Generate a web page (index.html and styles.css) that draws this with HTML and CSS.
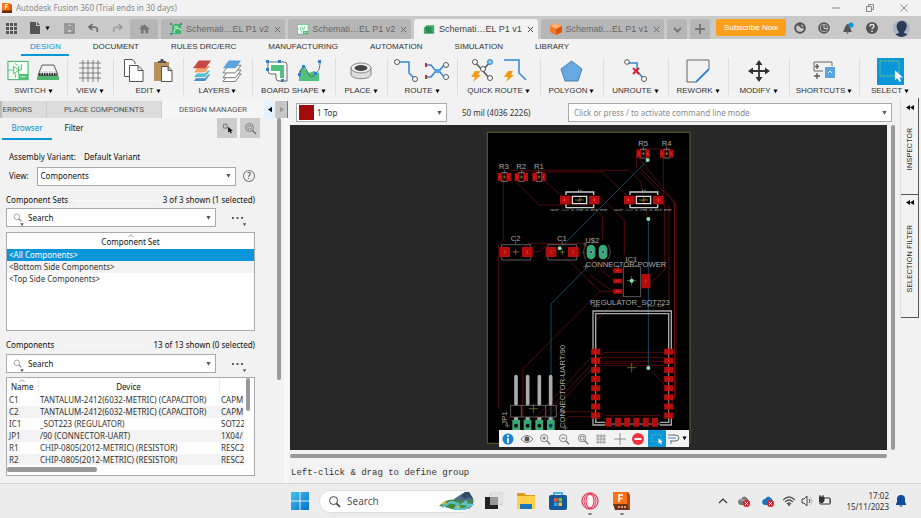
FILE: index.html
```html
<!DOCTYPE html>
<html lang="en">
<head>
<meta charset="utf-8">
<title>Autodesk Fusion 360</title>
<link rel="stylesheet" href="styles.css">
</head>
<body>
<svg class="defs" aria-hidden="true">
  <defs>
    <symbol id="down" viewBox="0 0 6 6"><path d="M.5.500h5L3 5z"/></symbol>
    <symbol id="close" viewBox="0 0 8 8"><path d="M1 1l6 6M7 1L1 7" fill="none" stroke="currentColor" stroke-width="1.100"/></symbol>
    <symbol id="mag" viewBox="0 0 14 14"><g fill="none" stroke="currentColor"><circle cx="6" cy="6" r="4.300"/><path d="M9 9l4 4" stroke-width="1.600"/></g></symbol>
    <symbol id="schem" viewBox="0 0 24 22"><rect x="1" y="1" width="21" height="19" fill="#f7fff9" stroke="#4dbd72" stroke-width="1.200"/><path d="M1 10h6v-4l5 4-5 4v-4M12 6v8M12 10h3V4M9 14v4M8 3l3 2" fill="none" stroke="#4dbd72"/><path d="M12 20v-6h10v6z" fill="#4dbd72"/><path d="M14 17h6" stroke="#d8f5e0"/></symbol>
    <symbol id="board" viewBox="0 0 14 12"><path d="M1 4l3-3h9v10H1z" fill="#3eaa66"/><path d="M4 4h3v3H4zM9 3v5M4 9h7" fill="none" stroke="#186b38"/></symbol>
    <symbol id="pick" viewBox="0 0 10 14"><path d="M1 0v11l3-2 2 4 2-1-2-4h4z" fill="currentColor"/></symbol>
    <symbol id="layers" viewBox="0 0 22 24"><path d="M1 23l6-8h13l-6 8z" class="l4"/><path d="M1 19l6-8h13l-6 8z" class="l3"/><path d="M1 14l6-8h13l-6 8z" class="l2"/><path d="M1 9l6-8h13l-6 8z" class="l1"/></symbol>
    <symbol id="r" viewBox="-22 -16 44 32" overflow="visible"><path d="M-10-13h20M-10 13h20" stroke="#aaa" stroke-width="2"/><path d="M-20-12h14v24h-14zM6-12h14v24H6z" fill="#b30d0d"/><path d="M-13-4v8M13-4v8" stroke="#f44" stroke-width="2"/><path d="M-5 0H5M0-5V5" stroke="#999a30" stroke-width="2"/></symbol>
  </defs>
</svg>

<header class="titlebar">
  <svg class="app-icon" viewBox="0 0 12 12"><path d="M0 1h10l2 1v10H0z" fill="#d95b08"/><path d="M0 0h9v9H0z" fill="#ff7817"/><path d="M0 9h12v3H0z" fill="#6b2b0d"/><path d="M4 7V2h3M4 4.500h2.500" fill="none" stroke="#fff" stroke-width="1.200"/></svg>
  <h1>Autodesk Fusion 360 (Trial ends in 30 days)</h1>
  <div class="window-buttons">
    <button aria-label="Minimize"><svg viewBox="0 0 8 8"><path d="M0 4h8"/></svg></button>
    <button aria-label="Restore"><svg viewBox="0 0 8 8"><path d="M.5 2.500h5v5h-5zM2.500 2V.500h5v5H6"/></svg></button>
    <button aria-label="Close"><svg viewBox="0 0 8 8"><path d="M.5.500l7 7M7.500.500l-7 7"/></svg></button>
  </div>
</header>

<nav class="tabbar" aria-label="Documents">
  <div class="quick">
    <button aria-label="Data panel"><svg viewBox="0 0 11 11" width="11" height="11"><path d="M0 0h3v3H0zM4 0h3v3H4zM8 0h3v3H8zM0 4h3v3H0zM4 4h3v3H4zM8 4h3v3H8zM0 8h3v3H0zM4 8h3v3H4zM8 8h3v3H8z" fill="#555"/></svg></button>
    <button class="file" aria-label="File"><svg viewBox="0 0 10 12" width="10" height="12"><path d="M0 0h6v4h4v8H0zM7 0l3 3H7z" fill="#555"/></svg><svg width="5" height="5"><use href="#down"/></svg></button>
    <button aria-label="Save"><svg viewBox="0 0 11 11" width="11" height="11"><path d="M1 1h9v9H1zM3 1v3h5V1M3 10V6h5v4" fill="none" stroke="#888" stroke-width="1.500"/></svg></button>
    <button aria-label="Undo"><svg viewBox="0 0 11 10" width="11" height="10"><path d="M1 4h5c3 0 4 2 3 5M4.500 1L1 4l3.500 3" fill="none" stroke="#666" stroke-width="1.600"/></svg></button>
    <button aria-label="Redo"><svg viewBox="0 0 11 10" width="11" height="10"><path d="M10 4H5C2 4 1 6 2 9M6.500 1L10 4 6.500 7" fill="none" stroke="#999" stroke-width="1.400"/></svg></button>
  </div>
  <button class="tab small home" aria-label="Home"><svg viewBox="0 0 12 10" width="11" height="10"><path d="M6 0l6 5h-2v5H7V6H5v4H2V5H0L2 3.500V1h1.500v1z" fill="#777"/></svg></button>
  <div class="tab"><svg width="12" height="12" viewBox="0 0 12 12"><path d="M2 2l2-1h7v10H2z" fill="#43b56c"/><path d="M4 10c0-5 4-6 7-3M4 4h4" stroke="#eaffef" fill="none"/><path d="M0 0h2v2H0zM10 0h2v2h-2zM0 10h2v2H0z" fill="#477fb5"/></svg><a href="#">Schemati…EL P1 v2</a><button aria-label="Close tab"><svg><use href="#close"/></svg></button></div>
  <div class="tab"><svg width="12" height="11"><use href="#schem"/></svg><a href="#">Schemati…EL P1 v2</a><button aria-label="Close tab"><svg><use href="#close"/></svg></button></div>
  <div class="tab active"><svg width="12" height="11"><use href="#board"/></svg><a href="#">Schemati…EL P1 v1</a><button aria-label="Close tab"><svg><use href="#close"/></svg></button></div>
  <div class="tab"><svg width="12" height="12" viewBox="0 0 12 12"><path d="M6 0l6 3v6l-6 3-6-3V3z" fill="#f27a24"/><path d="M6 0l6 3-6 3-6-3z" fill="#ffb071"/><path d="M6 6l6-3v6l-6 3z" fill="#d9560c"/></svg><a href="#">Schemati…EL P1 v1</a><button aria-label="Close tab"><svg><use href="#close"/></svg></button></div>
  <button class="tab small" aria-label="Tab list"><svg width="9" height="9" viewBox="0 0 9 9"><path d="M1 3l3.500 3.500L8 3" fill="none" stroke="#777" stroke-width="2"/></svg></button>
  <button class="tab small" aria-label="New tab"><svg width="10" height="10" viewBox="0 0 10 10"><path d="M5 0v10M0 5h10" stroke="#777" stroke-width="2"/></svg></button>
  <button class="subscribe">Subscribe Now</button>
  <div class="account">
    <button aria-label="Extensions"><svg viewBox="0 0 12 12"><circle cx="6" cy="6" r="4.800" fill="none" stroke="#555" stroke-width="2"/><path d="M6 1l1 4 4 1M3 2l3 2" stroke="#555" fill="none" stroke-width="1.600"/></svg></button>
    <button aria-label="Job status"><svg viewBox="0 0 12 12"><circle cx="6" cy="6" r="5.800" fill="#555"/><circle cx="6" cy="6" r="3.800" fill="none" stroke="#ccc" stroke-width=".8"/><path d="M6 3v3.500h3" stroke="#ddd" fill="none"/></svg></button>
    <button aria-label="Notifications"><svg viewBox="0 0 12 12"><path d="M1 10c2-2 1-7 5-8 3 1 2 6 4 8zM4 10.500h3L5.500 12z" fill="#555"/><circle cx="9" cy="3" r="2.600" fill="#0a96d8"/></svg></button>
    <button aria-label="Help"><svg viewBox="0 0 12 12"><circle cx="6" cy="6" r="6" fill="#555"/><path d="M4 4.500c0-3 4-2.500 4-.3C8 5.500 6 5.500 6 7.200M6 8.500V10" stroke="#eee" fill="none" stroke-width="1.400"/></svg></button>
    <button class="avatar" aria-label="Profile"><svg viewBox="0 0 17 17"><defs><clipPath id="av"><circle cx="8.500" cy="8.500" r="8.500"/></clipPath></defs><g clip-path="url(#av)"><path d="M0 0h17v17H0z" fill="#a9b4c4"/><path d="M1 17c1-4 5-3 5-5-4-4-3-11 3-11s6 7 2 11c0 2 4 1 5 5z" fill="#2c3c57"/></g></svg></button>
  </div>
</nav>

<nav class="menu" aria-label="Workspace">
  <a class="on" href="#">DESIGN</a><a href="#">DOCUMENT</a><a href="#">RULES DRC/ERC</a><a href="#">MANUFACTURING</a><a href="#">AUTOMATION</a><a href="#">SIMULATION</a><a href="#">LIBRARY</a>
</nav>

<div class="ribbon">
  <button><span class="pics"><svg width="23" height="22"><use href="#schem"/></svg><svg width="24" height="22" viewBox="0 0 24 22"><path d="M1 17l3-4h16l3 4v3H1z" fill="#4eb66e"/><path d="M2 15L6 5h12l4 10z" fill="#ddd" stroke="#666"/><path d="M7 6h10l2 5H5z" fill="#f3f3f3"/><path d="M3 14.500h18" stroke="#333" stroke-width="3" stroke-dasharray="1.500 1"/></svg></span><span>SWITCH<svg><use href="#down"/></svg></span></button>
  <button><span class="pics"><svg width="22" height="22" viewBox="0 0 22 22"><path d="M4 0v22M9 0v22M14 0v22M19 0v22M0 3h22M0 8h22M0 13h22M0 18h22" stroke="#666" stroke-width=".8"/></svg></span><span>VIEW<svg><use href="#down"/></svg></span></button>
  <button><span class="pics wide"><svg width="20" height="24" viewBox="0 0 20 24"><path d="M11 5V3L8 .500H.5v17H5" fill="#fff" stroke="#555"/><path d="M5.500 6.500H14l5 5v11H5.500zM14 6.500v5h5" fill="#fff" stroke="#555"/></svg><svg width="20" height="24" viewBox="0 0 20 24"><path d="M1 3h15v19H1z" fill="#b8935c"/><path d="M5 4V2h2l1-2h2l1 2h2v2z" fill="#555"/><path d="M8.500 7.500H15l4 4v11H8.500zM15 7.500v4h4" fill="#fff" stroke="#555"/></svg></span><span>EDIT<svg><use href="#down"/></svg></span></button>
  <button><span class="pics wide"><svg class="full" width="21" height="24"><use href="#layers"/></svg><svg class="plain" width="21" height="24"><use href="#layers"/></svg></span><span>LAYERS<svg><use href="#down"/></svg></span></button>
  <button><span class="pics wide"><svg width="23" height="23" viewBox="0 0 23 23"><path d="M2 2h16q3 0 3 3v16h-8q-3 0-3-3v-4H5q-3 0-3-3z" fill="#fff" stroke="#666"/><path d="M5 5h13v13h-4v-7H5z" fill="#50c27b"/><path d="M0 0h3v3H0zM12 0h3v3h-3zM0 8h3v3H0zM15 19h3v3h-3z" fill="#297fd1"/></svg><svg width="24" height="23" viewBox="0 0 24 23"><path d="M1 21V11l4-4 6 6 5-2 5 2v8z" fill="#50c27b"/><path d="M2 14q3-14 7-3t10 1q3-2 3-10" fill="none" stroke="#666"/><path d="M0 13h3v3H0zM4 5h3v3H4zM16 12h3v3h-3zM20 0h3v3h-3z" fill="#297fd1"/></svg></span><span>BOARD SHAPE<svg><use href="#down"/></svg></span></button>
  <button><span class="pics"><svg width="22" height="18" viewBox="0 0 22 18"><path d="M1 6v7c2 5 18 5 20 0V6z" fill="#ddd" stroke="#888"/><ellipse cx="11" cy="6" rx="10" ry="5" fill="#eee" stroke="#888"/><ellipse cx="11" cy="6" rx="6.500" ry="3" fill="#444"/></svg></span><span>PLACE<svg><use href="#down"/></svg></span></button>
  <button><span class="pics"><svg width="25" height="24" viewBox="0 0 25 24"><path d="M5 3h10v11l6 6" fill="none" stroke="#2f86d6" stroke-width="1.500"/><g fill="#fff" stroke="#555"><circle cx="3" cy="3" r="2.500"/><circle cx="21" cy="20" r="2.500"/></g></svg><svg width="25" height="20" viewBox="0 0 25 20"><path d="M1 4h5l4 5h5l4-5M1 16h5l4-5h5l4 5" fill="none" stroke="#2f86d6" stroke-width="1.500"/><path d="M1 2v4M1 14v4" stroke="#b33" stroke-width="2"/><g fill="#fff" stroke="#555"><circle cx="21" cy="4" r="2.500"/><circle cx="21" cy="16" r="2.500"/></g></svg></span><span>ROUTE<svg><use href="#down"/></svg></span></button>
  <button><span class="pics wide"><svg width="23" height="24" viewBox="0 0 23 24"><path d="M4 3l15 17M20 2l-8 9" stroke="#555" fill="none" stroke-width="1.500"/><g fill="#fff" stroke="#555"><circle cx="4" cy="3" r="2.500"/><circle cx="12" cy="10" r="2.500"/><circle cx="19" cy="19" r="2.500"/></g><circle cx="19" cy="3" r="2.500" fill="#8cc6f5" stroke="#2f86d6"/><path d="M4 12h5l-2 4h3L2 23l2-5H0z" fill="#f39b14"/></svg><svg width="24" height="24" viewBox="0 0 24 24"><path d="M1 1h15v13l7 7" fill="none" stroke="#2f86d6" stroke-width="1.500"/><path d="M5 12h5l-2 4h3L3 23l2-5H1z" fill="#f39b14"/></svg></span><span>QUICK ROUTE<svg><use href="#down"/></svg></span></button>
  <button><span class="pics"><svg width="23" height="22" viewBox="0 0 23 22"><path d="M11.500 1L22 9l-4 12H5L1 9z" fill="#65a9df" stroke="#4c83b5"/></svg></span><span>POLYGON<svg><use href="#down"/></svg></span></button>
  <button><span class="pics"><svg width="24" height="24" viewBox="0 0 24 24"><path d="M5 4h8v8l6 7" fill="none" stroke="#2f86d6" stroke-width="1.500"/><g fill="#fff" stroke="#555"><circle cx="3" cy="3" r="2.300"/><circle cx="20" cy="20" r="2.500"/></g><path d="M9 9l6 6M15 9l-6 6" stroke="#d8232d" stroke-width="2"/></svg></span><span>UNROUTE<svg><use href="#down"/></svg></span></button>
  <button><span class="pics"><svg width="25" height="24" viewBox="0 0 25 24"><path d="M10 23H1V1h22v9" fill="none" stroke="#666"/><path d="M10 23l13-13" stroke="#2f86d6" stroke-width="1.800"/></svg></span><span>REWORK<svg><use href="#down"/></svg></span></button>
  <button><span class="pics"><svg width="22" height="22" viewBox="0 0 22 22"><path d="M11 2v18M2 11h18" stroke="#333" stroke-width="1.800"/><path d="M11 0l3.500 5h-7zM11 22l3.500-5h-7zM0 11l5-3.500v7zM22 11l-5-3.500v7z" fill="#333"/></svg></span><span>MODIFY<svg><use href="#down"/></svg></span></button>
  <button><span class="pics"><svg width="22" height="20" viewBox="0 0 22 20"><path d="M10 10H1V1h18v4" fill="none" stroke="#666"/><path d="M4 3v5M2 5.500h4M4 12v6M1 15h6" stroke="#555" fill="none" stroke-width="1.300"/><path d="M12 6h10v11H12z" fill="#5aa5df"/><path d="M15 12l2-2 2 2" stroke="#fff" fill="none"/></svg></span><span>SHORTCUTS<svg><use href="#down"/></svg></span></button>
  <button><span class="pics"><svg class="select-pic" width="27" height="27" viewBox="0 0 27 27"><path d="M0 0h27v27H0z" fill="#0a96d8"/><path d="M3 3h19v15H3z" fill="none" stroke="#66c590" stroke-dasharray="3 1"/><use href="#pick" x="17" y="12" width="9" height="13" color="#fff"/></svg></span><span>SELECT<svg><use href="#down"/></svg></span></button>
</div>

<main>
  <aside class="manager">
    <div class="dock-tabs"><button class="errors">ERRORS</button><button class="place">PLACE COMPONENTS</button><button class="chosen">DESIGN MANAGER</button><button class="step" aria-label="Scroll left"><svg viewBox="0 0 5 7"><path d="M5 0v7L0 3.500z"/></svg></button><button class="step off" aria-label="Scroll right"><svg viewBox="0 0 5 7"><path d="M0 0v7l5-3.500z"/></svg></button></div>
    <div class="manager-body">
      <div class="content">
        <div class="views"><a class="on" href="#">Browser</a><a href="#">Filter</a>
          <button aria-label="Select in canvas"><svg viewBox="0 0 14 14"><path d="M2.500 2.500h4v4h-4zM6 6l3 2" fill="none" stroke="#777"/><use href="#pick" x="7" y="5" width="6" height="8" color="#111"/></svg></button><button aria-label="Zoom to selection"><svg viewBox="0 0 14 14" color="#777"><use href="#mag"/><circle cx="6" cy="6" r="2" fill="none" stroke="#777"/></svg></button></div>
        <div class="variant"><span>Assembly Variant:</span><span>Default Variant</span></div>
        <div class="view-row"><label for="view">View:</label><span class="drop"><select id="view"><option>Components</option></select><svg><use href="#down"/></svg></span><button class="help" aria-label="Help">?</button></div>
        <div class="heading"><h2>Component Sets</h2><span>3 of 3 shown (1 selected)</span></div>
        <div class="search-row"><span class="drop"><svg class="mag"><use href="#mag"/></svg><svg class="mag-arrow"><use href="#down"/></svg><input type="text" value="Search" aria-label="Search component sets"><svg><use href="#down"/></svg></span><button class="more" aria-label="More"><svg class="dots" viewBox="0 0 12 2"><path d="M0 0h2v2H0zM5 0h2v2H5zM10 0h2v2h-2z"/></svg><svg class="tick"><use href="#down"/></svg></button></div>
        <div class="box sets"><table><thead><tr><th><svg class="sort" viewBox="0 0 6 3"><path d="M.5 3L3 .500 5.500 3"/></svg>Component Set</th></tr></thead><tbody><tr class="picked"><td>&lt;All Components&gt;</td></tr><tr><td>&lt;Bottom Side Components&gt;</td></tr><tr><td>&lt;Top Side Components&gt;</td></tr></tbody></table></div>
        <div class="heading second"><h2>Components</h2><span>13 of 13 shown (0 selected)</span></div>
        <div class="search-row"><span class="drop"><svg class="mag"><use href="#mag"/></svg><svg class="mag-arrow"><use href="#down"/></svg><input type="text" value="Search" aria-label="Search components"><svg><use href="#down"/></svg></span><button class="more" aria-label="More"><svg class="dots" viewBox="0 0 12 2"><path d="M0 0h2v2H0zM5 0h2v2H5zM10 0h2v2h-2z"/></svg><svg class="tick"><use href="#down"/></svg></button></div>
        <div class="box parts">
          <div class="clip"><table><thead><tr><th class="c1"><svg class="sort" viewBox="0 0 6 3"><path d="M.5 3L3 .500 5.500 3"/></svg>Name</th><th class="c2">Device</th><th></th></tr></thead><tbody>
            <tr><td>C1</td><td>TANTALUM-2412(6032-METRIC) (CAPACITOR)</td><td>CAPM</td></tr>
            <tr><td>C2</td><td>TANTALUM-2412(6032-METRIC) (CAPACITOR)</td><td>CAPM</td></tr>
            <tr><td>IC1</td><td>_SOT223 (REGULATOR)</td><td>SOT22</td></tr>
            <tr><td>JP1</td><td>/90 (CONNECTOR-UART)</td><td>1X04/</td></tr>
            <tr><td>R1</td><td>CHIP-0805(2012-METRIC) (RESISTOR)</td><td>RESC2</td></tr>
            <tr><td>R2</td><td>CHIP-0805(2012-METRIC) (RESISTOR)</td><td>RESC2</td></tr></tbody></table></div>
          <div class="vbar"></div><div class="hbar"></div>
        </div>
      </div>
      <div class="panel-bar"></div>
    </div>
  </aside>

  <section class="editor">
    <div class="command">
      <span class="drop layer"><i class="swatch"></i><select aria-label="Layer"><option>1 Top</option></select><svg><use href="#down"/></svg></span>
      <span class="coords">50 mil (4036 2226)</span>
      <span class="drop line"><input type="text" placeholder="Click or press / to activate command line mode" aria-label="Command line"><svg><use href="#down"/></svg></span>
    </div>
    <div class="stage">
      <div class="canvas"><div class="board">
        <svg class="pcb" viewBox="0 0 651 975" role="img" aria-label="Board layout">
          <path d="M22 22H630V955H22z" fill="#000" stroke="#62602b" stroke-width="3"/>
          <g fill="none" stroke="#7a1010" stroke-width="2">
            <path d="M70 165V345L56 362V850L90 884M124 141H367L455 225M106 168L178 240H335L367 275V345M186 160L258 225M90 136H447L482 170L503 282M357 213L433 285V390M470 130V72H575M476 98L584 232V820L567 842M480 130L588 236V812M550 86V213L482 142M497 225H553V436L511 475M90 380H120L145 355H310L330 378M158 380H178L205 355M250 390L340 480M296 382H315L362 432L400 468M370 395L400 437M330 450L372 482L400 499M325 465L360 499H400M360 499L128 733V875M145 902L333 697H555M170 895L330 722M334 735L372 682H555M345 722H565M370 709H565M178 900L345 722M212 890L243 860H345L380 872H540M235 915L265 875H345M345 590L430 510M347 675V565M507 730L565 790M552 682H585M340 735L350 715H480"/>
            <path d="M567 240V560M584 232V820" stroke="#7b1010"/>
          </g>
          <path d="M503 105L250 360M505 282V730M213 905V537L330 418" stroke="#1d6f90" stroke-width="2" fill="none"/>
          <g><use href="#r" x="51" y="140" width="44" height="32"/><use href="#r" x="102" y="140" width="44" height="32"/><use href="#r" x="155" y="140" width="44" height="32"/><use href="#r" x="468" y="70" width="44" height="32"/><use href="#r" x="538" y="70" width="44" height="32"/></g>
          <g id="switch"><path d="M258 210V201H341V210M258 238V248H341V238" fill="none" stroke="#ccc" stroke-width="4"/><path d="M277 214H320V236H277z" fill="none" stroke="#ddd" stroke-width="4"/><path d="M240 212h32v26h-32zM327 212h32v26h-32z" fill="#b30d0d"/><path d="M285 225H312M290 229L307 220M299 217V233" stroke="#898b39" stroke-width="2"/><path d="M253 220v10M248 225h10M343 220v10M338 225h10" stroke="#f44" stroke-width="2"/><path d="M294 192l5 8 5-8v8h-10z" fill="#aaa"/></g>
          <use href="#switch" x="192"/>
          <g fill="none" stroke="#888" stroke-width="2"><path d="M65 359H152V405H65zM204 359H290V405H204zM430 425H482V515H430z"/><path d="M73 135v12M125 135v12M176 135v12M490 65v12M560 65v12M107 348v10M247 348v10"/></g>
          <path d="M58 366h32v30H58zM126 366h32v30h-32zM197 366h32v30h-32zM264 366h32v30h-32zM400 430h27v14h-27zM400 461h27v14h-27zM400 492h27v14h-27zM484 447h27v43h-27z" fill="#b30d0d"/>
          <path d="M74 376v10M142 376v10M213 376v10M280 376v10M408 437h10M408 468h10M408 499h10M497 463v10" stroke="#f44" stroke-width="2"/>
          <path d="M99 381h16M107 373v16M239 381h16M247 373v16M441 728h28M455 714v28M146 851h28M160 837v28M441 467h28M455 453v28" stroke="#8a8c36" stroke-width="2"/>
          <g fill="#35aa72"><rect x="320" y="359" width="26" height="44" rx="13"/><rect x="356" y="359" width="26" height="44" rx="13"/></g>
          <path d="M318 359q-14 22 0 44M384 359q14 22 0 44" fill="none" stroke="#777" stroke-width="2"/>
          <g fill="#24504c" stroke="#9ad" stroke-width="2"><circle cx="333" cy="381" r="5"/><circle cx="369" cy="381" r="5"/></g>
          <path d="M339 676V558H574V676M347 676V566H566V676M339 880V900H375M347 880V892H375M574 880V900H540M566 880V892H540" fill="none" stroke="#aaa" stroke-width="4"/>
          <path d="M347 670V888M566 670V888M375 897H540" stroke="#999" stroke-width="3"/>
          <path d="M347 671V890M566 671V890" stroke="#b30d0d" stroke-width="27" stroke-dasharray="18 9.400"/>
          <path d="M377 892H535" stroke="#b30d0d" stroke-width="27" stroke-dasharray="18 9.800"/>
          <path d="M345 676v8M345 703v8M345 731v8M345 758v8M345 786v8M345 813v8M345 840v8M345 868v8M566 676v8M566 703v8M566 731v8M566 758v8M566 786v8M566 813v8M566 840v8M566 868v8" stroke="#f13a3a" stroke-width="2"/>
          <path d="M92 841H229V876H92zM124 841V876M197 841V876" fill="none" stroke="#888" stroke-width="2"/>
          <path d="M108 755V836M143 755V836M178 755V836M212 755V836" stroke="#aaa" stroke-width="11" stroke-linecap="round"/>
          <path d="M108 877v12M143 877v12M178 877v12M212 877v12" stroke="#aaa" stroke-width="12"/>
          <path d="M97 884h23v34H97zM131 884h23v34h-23zM166 884h23v34h-23zM201 884h23v34h-23z" fill="#35aa72"/>
          <g fill="#111"><circle cx="108" cy="902" r="6"/><circle cx="143" cy="902" r="6"/><circle cx="178" cy="902" r="6"/><circle cx="212" cy="902" r="6" fill="#163d66"/></g>
          <g fill="#8fe0b5"><circle cx="503" cy="105" r="6"/><circle cx="505" cy="282" r="6"/><circle cx="239" cy="370" r="6"/><circle cx="455" cy="467" r="6"/><circle cx="505" cy="729" r="6"/></g>
          <path d="M310 425h14M317 418v14M75 902h14M82 895v14M249 909h14M256 902v14M310 357h10M315 352v10M410 425h10M415 420v10" stroke="#888" stroke-width="2"/>
          <g class="names"><text x="57" y="133">R3</text><text x="109" y="133">R2</text><text x="162" y="133">R1</text><text x="475" y="63">R5</text><text x="545" y="63">R4</text><text x="92" y="348">C2</text><text x="231" y="348">C1</text><text x="316" y="354">U$2</text><text x="436" y="411">IC1</text><text x="317" y="425">CONNECTOR-POWER</text><text x="330" y="540">REGULATOR_SOT223</text><text transform="translate(255 909) rotate(-90)">CONNECTOR-UART/90</text><text transform="translate(80 899) rotate(-90)">JP1</text></g>
          <g class="tiny"><text x="209" y="258">SWIP-7+2*6-SMD-6.0X3.5MM</text><text x="401" y="258">SWIP-7+2*6-SMD-6.0X3.5MM</text><text x="338" y="546">U$1</text><text x="502" y="546">ESP-12F</text></g>
        </svg>
        <div class="view-tools">
          <button aria-label="Info"><svg viewBox="0 0 12 12"><circle cx="6" cy="6" r="5.500" fill="#1882d8"/><path d="M6 2v2M6 5v5" stroke="#fff" stroke-width="1.700"/></svg></button>
          <button aria-label="Visibility"><svg viewBox="0 0 12 12"><path d="M0 6q6-7 12 0-6 7-12 0z" fill="#fff" stroke="#777"/><circle cx="6" cy="6" r="2.500" fill="#555"/></svg></button>
          <button aria-label="Zoom in"><svg viewBox="0 0 14 14" color="#777"><use href="#mag"/><path d="M6 4v4M4 6h4" stroke="#555"/></svg></button>
          <button aria-label="Zoom out"><svg viewBox="0 0 14 14" color="#777"><use href="#mag"/><path d="M4 6h4" stroke="#555"/></svg></button>
          <button aria-label="Zoom to fit"><svg viewBox="0 0 14 14" color="#777"><use href="#mag"/><path d="M4 4h4v4H4z" stroke="#888" fill="none"/></svg></button>
          <button aria-label="Grid"><svg viewBox="0 0 12 12"><path d="M3 1v10M6 1v10M9 1v10M1 3h10M1 6h10M1 9h10" stroke="#888" stroke-width=".8"/></svg></button>
          <button aria-label="Origin"><svg viewBox="0 0 12 12"><path d="M6 0v12M0 6h12" stroke="#777" stroke-width=".8"/></svg></button>
          <button aria-label="Stop"><svg viewBox="0 0 12 12"><circle cx="6" cy="6" r="6" fill="#ef3340"/><path d="M2.500 6h7" stroke="#fff" stroke-width="2"/></svg></button>
          <button class="on" aria-label="Group select"><svg viewBox="0 0 14 14"><path d="M1 2h11v8H1z" fill="none" stroke="#56be95" stroke-dasharray="2 1"/><use href="#pick" x="8" y="6" width="6" height="8" color="#fff"/></svg></button>
          <button class="last" aria-label="Selection options"><svg viewBox="0 0 12 12"><path d="M0 2h7q4 0 4 3t-4 3H2" fill="none" stroke="#666"/><path d="M0 5h8M3 8v3" stroke="#2f86d6"/></svg><svg class="arrow"><use href="#down"/></svg></button>
        </div>
      </div></div>
      <div class="stage-v"></div>
      <div class="stage-h"></div>
    </div>
    <p class="status">Left-click &amp; drag to define group</p>
  </section>

  <aside class="side">
    <button class="inspector"><svg viewBox="0 0 8 5"><path d="M4 0v5L0 2.500zM8 0v5L4 2.500z"/></svg><span>INSPECTOR</span></button>
    <button class="selection"><svg viewBox="0 0 8 5"><path d="M4 0v5L0 2.500zM8 0v5L4 2.500z"/></svg><span>SELECTION FILTER</span></button>
  </aside>
</main>

<footer class="taskbar">
  <div class="apps">
    <button aria-label="Start"><svg width="18" height="18" viewBox="0 0 18 18"><defs><linearGradient id="win" x2="1" y2="1"><stop stop-color="#43c4f3"/><stop offset="1" stop-color="#0670c9"/></linearGradient></defs><path d="M0 0h8.500v8.500H0zM9.500 0H18v8.500H9.500zM0 9.500h8.500V18H0zM9.500 9.500H18V18H9.500z" fill="url(#win)"/></svg></button>
    <label class="find"><svg width="13" height="13"><use href="#mag"/></svg><input type="text" value="Search" aria-label="Search Windows"><svg class="scene" width="35" height="18" viewBox="0 0 35 18"><path d="M15 7l6-4 5-3h4l4 6q2 7-4 11H14z" fill="#526f83"/><path d="M22 4l4-4h4l4 7-5-2-3 2z" fill="#314c69"/><path d="M0 14q8-8 17-6 8 3 17-1-1 8-6 10H12q-4-2-12-3z" fill="#468a3b"/><path d="M3 15l9-5 7 2-3 5h10l6-4-8-1 4-3" fill="none" stroke="#5bc3cf" stroke-width="2.500"/><path d="M3 12l4-2M18 16l3-2" stroke="#d2c340" stroke-width="2"/></svg></label>
    <button aria-label="Task view"><svg width="18" height="18" viewBox="0 0 18 18"><path d="M5 1h13v12H5z" fill="#e4e4e4" stroke="#d5d5d5"/><path d="M0 5h5v8h8v4H0z" fill="#222"/><path d="M5 5h8v8H5z" fill="#999"/></svg></button>
    <button aria-label="File Explorer"><svg width="18" height="18" viewBox="0 0 18 18"><path d="M0 1h7l2 2h9v6H0z" fill="#d99a1b"/><path d="M0 4h18v13H0z" fill="#ffcf4b"/><path d="M3 17v-5h12v5z" fill="#1877bd"/></svg></button>
    <button aria-label="Microsoft Store"><svg width="18" height="18" viewBox="0 0 18 18"><path d="M5 4V1h8v3" fill="none" stroke="#43b1ed" stroke-width="2"/><rect y="3" width="18" height="15" rx="2" fill="#17569a"/><path d="M5 6h3.500v3.500H5z" fill="#ed5936"/><path d="M9.500 6H13v3.500H9.500z" fill="#86bd34"/><path d="M5 10.500h3.500V14H5z" fill="#2fa5e8"/><path d="M9.500 10.500H13V14H9.500z" fill="#f5bd2d"/></svg></button>
    <button class="running" aria-label="Opera GX"><svg width="18" height="18" viewBox="0 0 18 18"><g fill="#fff5f7" stroke="#e2405f" stroke-width="1.300"><circle cx="9" cy="9" r="8"/><ellipse cx="9" cy="9" rx="4" ry="7"/></g><path d="M5 3q-4 6 0 12M13 3q4 6 0 12" fill="none" stroke="#e2405f"/></svg></button>
    <button class="running" aria-label="Fusion 360"><svg width="17" height="18" viewBox="0 0 17 18"><path d="M2 0h13l2 3v15H2z" fill="#b94809"/><path d="M0 0h14v12H0z" fill="#fb7117"/><path d="M0 12h14l2 6H2z" fill="#713011"/><path d="M6 10V3h4M6 6.500h3.500" fill="none" stroke="#fff" stroke-width="1.600"/><path d="M5 15h8" stroke="#e5c3ad" stroke-width="1.500" stroke-dasharray="2 1"/></svg></button>
  </div>
  <div class="tray">
    <button aria-label="Hidden icons"><svg viewBox="0 0 12 12"><path d="M2 8l4-4 4 4" fill="none" stroke="#333" stroke-width="1.200"/></svg></button>
    <button class="cloud" aria-label="Cloud, sync error"><svg viewBox="0 0 12 12"><path d="M0 8q0-4 3-4 3-5 7 0l2 4-2 2H2z" fill="#777"/><path d="M2 5q6-1 8 4" stroke="#ccc" fill="none"/><circle cx="8.500" cy="8.500" r="3.500" fill="#d92432"/><path d="M7 7l3 3M10 7l-3 3" stroke="#fff"/></svg></button>
    <button class="cloud" aria-label="OneDrive, sync error"><svg viewBox="0 0 12 12"><path d="M0 8q0-4 3-4 3-5 7 0l2 4-2 2H2z" fill="#1b75bd"/><circle cx="8.500" cy="8.500" r="3.500" fill="#d92432"/><path d="M7 7l3 3M10 7l-3 3" stroke="#fff"/></svg></button>
    <button aria-label="Wi-Fi"><svg viewBox="0 0 12 12"><path d="M0 5q6-6 12 0M2 7q4-4 8 0M4 9q2-2 4 0" fill="none" stroke="#555" stroke-width="1.200"/><circle cx="6" cy="10" r="1" fill="#333"/></svg></button>
    <button aria-label="Volume"><svg viewBox="0 0 12 12"><path d="M1 4h2l3-3v10L3 8H1z" fill="none" stroke="#444"/><path d="M8 4q2 2 0 4" fill="none" stroke="#444"/><path d="M9 2q4 4 0 8" fill="none" stroke="#bbb"/></svg></button>
    <button aria-label="Battery"><svg viewBox="0 0 12 12"><path d="M5 3h6v6H1V7M11 5h1v2h-1" fill="none" stroke="#333"/><path d="M0 2h5v4L3 8 0 6zM1 0v2M4 0v2" fill="#333" stroke="#333"/></svg></button>
    <div class="clock"><span>17:02</span><span>15/11/2023</span></div>
    <button aria-label="Notifications"><svg viewBox="0 0 12 12"><path d="M1 9l1-2V4q0-4 4-4t4 4v3l1 2v1H1zM4 10.500h4L6 12z" fill="#124a9c"/></svg></button>
  </div>
</footer>
</body>
</html>
```
FILE: styles.css
```css
* { box-sizing: border-box; }
body {
  margin: 0;
  min-height: 100vh;
  display: flex;
  flex-direction: column;
  background: #f2f2f2;
  color: #333;
  font: 8px/12px "Noto Sans", sans-serif;
}
button, input, select { font: inherit; color: inherit; }
button { border: 0; padding: 0; background: none; }
a { color: inherit; text-decoration: none; }
h1, h2, p { margin: 0; font-size: inherit; font-weight: 400; }
svg { display: block; flex: none; }
.defs { position: absolute; width: 0; height: 0; }

.titlebar { display: flex; align-items: center; gap: 4px; height: 16px; padding: 0 13px 0 2px; color: #888; }
.app-icon { width: 10px; height: 12px; }
.window-buttons { display: flex; gap: 26px; margin-left: auto; }
.window-buttons svg { width: 8px; height: 8px; fill: none; stroke: #888; }

.tabbar { display: flex; gap: 3px; height: 23px; padding: 3px 11px 0 6px; background: #c9c9c9; font: 9px/12px "Liberation Sans", sans-serif; }
.quick { display: flex; align-items: center; gap: 13px; width: 121px; padding-bottom: 2px; }
.quick .file { display: flex; align-items: center; gap: 5px; margin-right: 1px; }
.tab { display: flex; flex: 1; align-items: center; gap: 4px; min-width: 0; padding: 0 4px 0 9px; border-radius: 3px 3px 0 0; background: #b6b6b6; color: #666; }
.tab a { flex: 1; white-space: nowrap; }
.tab button svg { width: 7px; height: 7px; }
.tab.active { background: #f2f2f2; color: #444; }
.tab.small { flex: 0 0 20px; justify-content: center; padding: 0; }
.tab.home { flex-basis: 28px; }
.subscribe { width: 70px; height: 17px; margin-left: 3px; border-radius: 2px; background: #fba01d; color: #fff; font-size: 8px; }
.account { display: flex; align-items: center; gap: 12px; margin-left: 5px; padding-bottom: 2px; }
.account svg { width: 12px; height: 12px; }
.account .avatar { margin-left: 3px; }
.account .avatar svg { width: 17px; height: 17px; }

.menu { display: flex; gap: 32px; height: 17px; padding-left: 30px; font: 8px/16px "Liberation Sans", sans-serif; }
.menu .on { margin: 0 -8px 0 -9px; padding: 0 8px 0 9px; border-bottom: 2px solid #0a96d8; color: #0a8fcf; }

.ribbon { display: grid; grid-template-columns: 67fr 46fr 70fr 69fr 83fr 52fr 70fr 83fr 63fr 65fr 60fr 61fr 70fr 62fr; height: 42px; font: 8px/10px "Liberation Sans", sans-serif; }
.ribbon button { position: relative; display: flex; flex-direction: column; align-items: center; white-space: nowrap; }
.ribbon button + button::before { content: ""; position: absolute; left: 0; top: 2px; width: 1px; height: 37px; background: #ddd; }
.pics { display: flex; align-items: center; justify-content: center; gap: 6px; height: 30px; }
.pics.wide { gap: 9px; }
.ribbon button > span:last-child { display: flex; align-items: center; gap: 2px; }
.ribbon button > span:last-child svg { width: 5px; height: 5px; }
.full { --a: #c74747; --b: #f4a068; --c: #5dbfd0; --d: #4a8fcc; --edge: #fff; }
.plain { --a: #5aa4de; --b: #fff; --c: #fff; --d: #fff; --edge: #777; }
.l1 { fill: var(--a); }
.l2 { fill: var(--b); }
.l3 { fill: var(--c); }
.l4 { fill: var(--d); }
.l2, .l3, .l4 { stroke: var(--edge); stroke-width: 1px; }

main { display: flex; flex: 1; min-height: 385px; }
.manager { display: flex; flex-direction: column; width: 289px; padding-top: 3px; }
.dock-tabs { display: flex; height: 17px; font: 8px/17px Roboto, sans-serif; }
.dock-tabs button { background: #dcdcdc; color: #555; border-right: 1px solid #ccc; }
.dock-tabs .errors { width: 47px; padding-right: 14px; text-align: right; border-left: 2px solid #bbb; }
.dock-tabs .place { width: 115px; }
.dock-tabs .chosen { width: 102px; background: #f5f5f5; border: 0; }
.dock-tabs .step { display: flex; align-items: center; justify-content: center; width: 12px; background: #e3f2fc; }
.dock-tabs .off { background: #c6c6c6; border-right-color: #777; fill: #999; }
.step svg { width: 4px; height: 7px; }
.manager-body { display: flex; flex: 1; border-right: 5px solid #f8f8f8; }
.content { flex: 1; min-width: 0; padding-left: 6px; color: #111; }
.panel-bar { width: 4px; height: 262px; margin: 0 3px 0 22px; border-radius: 2px; background: #999; }
.views { display: flex; height: 22px; gap: 3px; }
.views a { width: 38px; margin-right: 8px; text-align: center; line-height: 20px; }
.views .on { width: 50px; margin-left: -4px; margin-right: 0; border-bottom: 2px solid #0a96d8; color: #0a8fcf; }
.views button { display: flex; align-items: center; justify-content: center; width: 20px; height: 20px; background: #ccc; }
.views a + button { margin-left: auto; }
.views button:last-child { margin-right: -5px; }
.views button svg { width: 13px; height: 13px; }
.variant { display: flex; gap: 8px; padding: 11px 3px 4px; }
.view-row { display: flex; align-items: center; height: 18px; padding-left: 3px; }
.view-row label { width: 28px; }
.drop { position: relative; display: flex; align-items: center; height: 19px; border: 1px solid #aaa; background: #fff; }
.drop select, .drop input { flex: 1; min-width: 0; width: 100%; padding: 0 3px; border: 0; background: none; appearance: none; outline: 0; }
.drop > svg { position: absolute; right: 4px; width: 5px; height: 6px; fill: #555; pointer-events: none; }
.view-row .drop { width: 203px; }
.help { width: 12px; height: 12px; margin-left: 7px; border: 1px solid #777; border-radius: 50%; line-height: 10px; }
.heading { display: flex; justify-content: space-between; align-items: center; gap: 6px; margin: 9px 0 2px; }
.heading::before { content: ""; order: 1; flex: 1; height: 1px; background: #fafafa; }
.heading span { order: 2; }
.heading.second { margin: 8px 0 3px; }
.search-row { display: flex; }
.search-row .drop { width: 210px; }
.search-row .drop input { padding-left: 21px; }
.search-row .drop .mag { left: 6px; width: 9px; height: 9px; fill: none; color: #777; }
.search-row .drop .mag-arrow { left: 13px; top: 14px; width: 4px; height: 4px; }
.more { position: relative; margin-left: 16px; fill: #555; }
.dots { width: 11px; height: 2px; }
.tick { position: absolute; right: -4px; bottom: 0; width: 5px; height: 4px; }
.box { position: relative; border: 1px solid #aaa; background: #fff; }
.sets { height: 99px; margin-top: 5px; }
.parts { height: 99px; margin-top: 4px; }
table { width: 100%; border-collapse: collapse; table-layout: fixed; }
th { position: relative; height: 16px; padding: 2px 0 0; font-weight: 400; color: #111; }
.sort { position: absolute; top: 1px; left: calc(50% - 3px); width: 6px; height: 3px; fill: none; stroke: #999; }
td { height: 12px; padding: 0 2px; line-height: 12px; white-space: nowrap; color: #333; }
tbody tr:nth-child(even) { background: #f3f3f3; }
tbody .picked { background: #0a96d8; }
.picked td { color: #fff; }
.clip { width: 237px; height: 87px; overflow: hidden; }
.c1 { width: 31px; }
.c2 { width: 181px; }
.c1, .c2 { border-right: 1px solid #eee; }
.vbar { position: absolute; top: 0; right: 4px; width: 4px; height: 33px; border-radius: 2px; background: #999; }
.hbar { position: absolute; left: 0; bottom: 3px; width: 90px; height: 5px; border-radius: 2px; background: #999; }

.editor { flex: 1; min-width: 0; display: flex; flex-direction: column; padding-left: 1px; }
.command { display: flex; align-items: center; height: 27px; padding: 2px 3px 0 6px; }
.layer { width: 151px; }
.swatch { flex: none; width: 15px; height: 15px; margin-left: 2px; background: #a30a0a; }
.coords { width: 106px; margin-left: 15px; white-space: nowrap; }
.line { flex: 1; }
.drop.line input { padding-left: 5px; }
.line input::placeholder { color: #888; opacity: 1; }
.stage { display: grid; grid-template-columns: 1fr 4px; column-gap: 4px; row-gap: 4px; }
.canvas { display: flex; justify-content: center; height: 325px; background: #282828; }
.board { position: relative; width: 217px; }
.pcb { width: 100%; }
.names { fill: #aaa; font: 23px "Liberation Sans", sans-serif; }
.tiny { fill: #aaa; font: 12px "Liberation Mono", monospace; }
.view-tools { position: absolute; left: 19px; top: 305px; display: flex; width: 190px; height: 17px; background: #f3f3f3; }
.view-tools button { display: flex; flex: 1; align-items: center; justify-content: center; }
.view-tools svg { width: 12px; height: 12px; }
.view-tools .on { background: #0a96d8; }
.view-tools .last { flex: 0 0 23px; gap: 2px; }
.view-tools .last .arrow { width: 5px; height: 5px; }
.stage-v, .stage-h { border-radius: 2px; background: #999; }
.stage-h { height: 4px; }
.status { margin: 9px 0 0 1px; font: 9px/12px "Liberation Mono", monospace; }

.side { width: 26px; padding-left: 6px; }
.side button { display: flex; flex-direction: column; align-items: center; width: 18px; border: solid #555; border-width: 0 1px 1px 0; box-shadow: -1px 0 #ddd; font: 8px/10px Roboto, sans-serif; }
.side svg { width: 8px; height: 5px; }
.side span { writing-mode: vertical-rl; transform: rotate(180deg); }
.side .inspector { height: 97px; padding-top: 7px; gap: 18px; }
.side .selection { height: 123px; padding-top: 5px; gap: 20px; }

.taskbar { display: grid; grid-template-columns: 1fr auto 1fr; align-items: center; height: 35px; border-top: 1px solid #d5d5d5; background: #ececec; }
.apps { grid-column: 2; display: flex; align-items: center; gap: 14px; }
.find { display: flex; align-items: center; width: 156px; height: 23px; margin: 0 -4px 0 -4px; padding-left: 8px; border: 1px solid #ddd; border-radius: 12px; background: #fff; font-size: 10px; }
.find input { flex: 1; min-width: 0; padding: 0 6px; border: 0; background: none; color: #555; outline: 0; }
.running { position: relative; }
.running::after { content: ""; position: absolute; left: 7px; bottom: -5px; width: 4px; height: 2px; border-radius: 1px; background: #888; }
.tray { display: flex; align-items: center; justify-content: flex-end; gap: 6px; padding-right: 14px; }
.tray svg { width: 12px; height: 12px; }
.tray .cloud { margin: 0 3px; }
.clock { display: flex; flex-direction: column; width: 52px; text-align: right; line-height: 11px; }
```
